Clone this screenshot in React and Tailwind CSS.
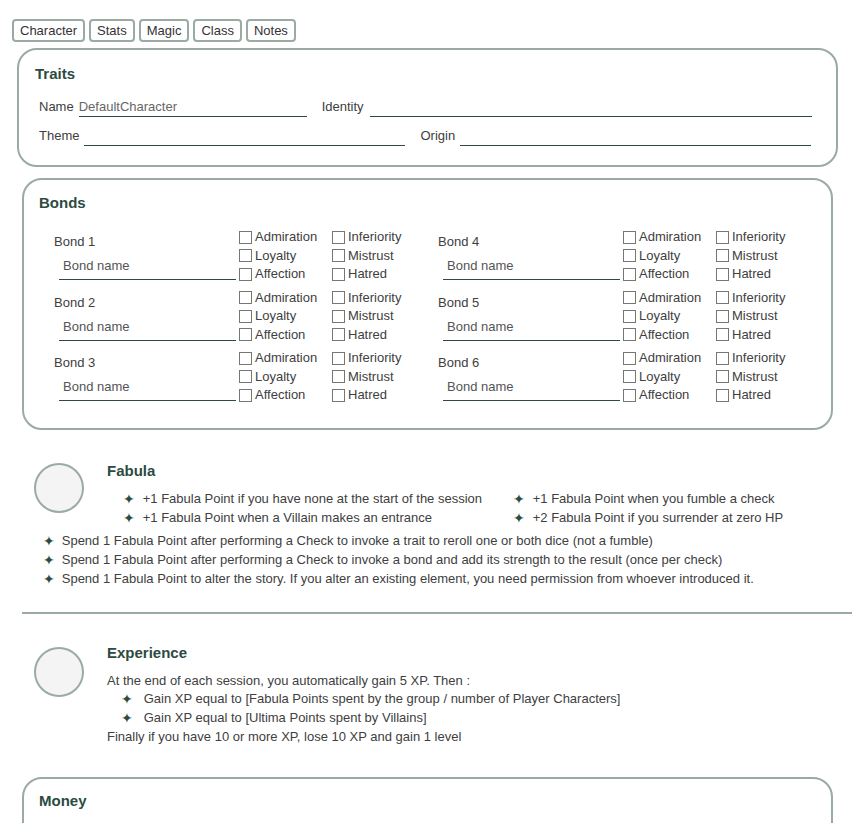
const tabs = ["Character", "Stats", "Magic", "Class", "Notes"];

const feelings = [
  ["Admiration", "Inferiority"],
  ["Loyalty", "Mistrust"],
  ["Affection", "Hatred"],
];

function Check({ label }) {
  return (
    <div className="flex items-center gap-[3px] w-[93px]">
      <span className="w-[13px] h-[13px] border border-[#767676] bg-white shrink-0" />
      <span className="leading-[18.5px]">{label}</span>
    </div>
  );
}

function Bond({ n }) {
  return (
    <div className="flex w-[384px] h-[55.5px]">
      <div className="w-[182px] flex flex-col">
        <div className="mt-[6px] leading-[16px]">Bond {n}</div>
        <div className="mt-[8px] ml-[5px] h-[22px] border-b border-[#2d4b40] pl-[4px] text-[#555] leading-[15px]">
          Bond name
        </div>
      </div>
      <div className="ml-[3px] flex flex-col">
        {feelings.map((row) => (
          <div key={row[0]} className="flex h-[18.5px] items-center">
            <Check label={row[0]} />
            <Check label={row[1]} />
          </div>
        ))}
      </div>
    </div>
  );
}

function Star() {
  return <span className="text-[#2d4b40] text-[14px] leading-[14px] font-['DejaVu_Sans']">✦</span>;
}

function Bullet({ children, gap = "gap-[7px]" }) {
  return (
    <div className={`flex items-center ${gap} leading-[19px]`}>
      <Star />
      <span>{children}</span>
    </div>
  );
}

function Circle() {
  return (
    <div className="w-[50px] h-[50px] rounded-full border-2 border-[#9aaba3] bg-[#f4f4f4] shrink-0" />
  );
}

export default function App() {
  return (
    <div className="font-['Liberation_Sans',Arial,sans-serif] text-[13px] text-[#404040] bg-white min-h-[823px] pb-10">
      <div className="flex gap-1 ml-3 pt-[19px]">
        {tabs.map((t) => (
          <button
            key={t}
            className="h-[23px] px-[6px] border-2 border-[#9aaba3] rounded-[4px] text-[#333] leading-[19px]"
          >
            {t}
          </button>
        ))}
      </div>

      <div className="mt-[6px] ml-[17px] w-[821px] h-[119px] border-2 border-[#9aaba3] rounded-[20px] pt-[15px] px-4">
        <div className="font-bold text-[15px] leading-[18px] text-[#2c4b3f]">Traits</div>
        <div className="mt-[14px] ml-1 flex items-center h-[20px]">
          <span>Name</span>
          <div className="ml-[5px] w-[228px] h-[20px] border-b border-[#2d4b40] text-[#666] leading-[20px]">
            DefaultCharacter
          </div>
          <span className="ml-[15px]">Identity</span>
          <div className="ml-[6px] w-[442px] h-[20px] border-b border-[#2d4b40]" />
        </div>
        <div className="mt-[9px] ml-1 flex items-center h-[20px]">
          <span>Theme</span>
          <div className="ml-[5px] w-[321px] h-[20px] border-b border-[#2d4b40]" />
          <span className="ml-[15px]">Origin</span>
          <div className="ml-[5px] w-[351px] h-[20px] border-b border-[#2d4b40]" />
        </div>
      </div>

      <div className="mt-[11px] ml-[22px] w-[811px] h-[252px] border-2 border-[#9aaba3] rounded-[20px] pt-[14px] pl-[15px]">
        <div className="font-bold text-[15px] leading-[18px] text-[#2c4b3f]">Bonds</div>
        <div className="mt-[16px] ml-[15px] grid grid-cols-[384px_384px] gap-y-[5px]">
          {[1, 4, 2, 5, 3, 6].map((n) => (
            <Bond key={n} n={n} />
          ))}
        </div>
      </div>

      <div className="mt-[31px]">
        <div className="flex">
          <div className="ml-[34px] mt-[2px]">
            <Circle />
          </div>
          <div className="ml-[23px]">
            <div className="font-bold text-[15px] leading-[18px] text-[#2c4b3f] mt-[1px]">Fabula</div>
            <div className="mt-[9px] ml-[16px] grid grid-cols-[390px_auto]">
              <Bullet gap="gap-[8px]">+1 Fabula Point if you have none at the start of the session</Bullet>
              <Bullet gap="gap-[8px]">+1 Fabula Point when you fumble a check</Bullet>
              <Bullet gap="gap-[8px]">+1 Fabula Point when a Villain makes an entrance</Bullet>
              <Bullet gap="gap-[8px]">+2 Fabula Point if you surrender at zero HP</Bullet>
            </div>
          </div>
        </div>
        <div className="mt-[4px] ml-[43px]">
          <Bullet>Spend 1 Fabula Point after performing a Check to invoke a trait to reroll one or both dice (not a fumble)</Bullet>
          <Bullet>Spend 1 Fabula Point after performing a Check to invoke a bond and add its strength to the result (once per check)</Bullet>
          <Bullet>Spend 1 Fabula Point to alter the story. If you alter an existing element, you need permission from whoever introduced it.</Bullet>
        </div>
      </div>

      <div className="mt-[24px] ml-[22px] w-[830px] h-[2px] bg-[#9aaba3]" />

      <div className="mt-[30px] flex">
        <div className="ml-[34px] mt-[3px]">
          <Circle />
        </div>
        <div className="ml-[23px]">
          <div className="font-bold text-[15px] leading-[18px] text-[#2c4b3f]">Experience</div>
          <div className="mt-[9px] leading-[19px]">
            At the end of each session, you automatically gain 5 XP. Then :
          </div>
          <div className="ml-[14px] -mt-[1px]">
            <Bullet gap="gap-[11px]">Gain XP equal to [Fabula Points spent by the group / number of Player Characters]</Bullet>
            <Bullet gap="gap-[11px]">Gain XP equal to [Ultima Points spent by Villains]</Bullet>
          </div>
          <div className="leading-[19px]">Finally if you have 10 or more XP, lose 10 XP and gain 1 level</div>
        </div>
      </div>

      <div className="mt-[31px] ml-[22px] w-[811px] h-[120px] border-2 border-[#9aaba3] rounded-[20px] pt-[13px] pl-[15px]">
        <div className="font-bold text-[15px] leading-[18px] text-[#2c4b3f]">Money</div>
      </div>
    </div>
  );
}
